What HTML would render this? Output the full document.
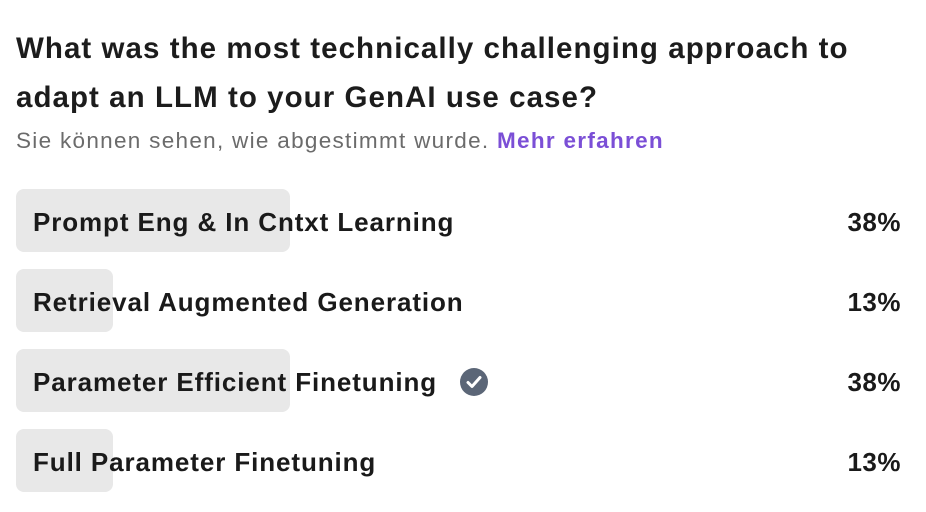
<!DOCTYPE html>
<html><head><meta charset="utf-8"><style>
body{margin:0;width:926px;height:512px;background:#fff;font-family:"Liberation Sans",Arial,sans-serif;color:#1a1a1a;position:relative;overflow:hidden}
.t{position:absolute;left:16px;top:24px;font-size:29.5px;font-weight:bold;line-height:49px;color:#1c1c1c;letter-spacing:1.05px;white-space:nowrap}
.s{position:absolute;left:16px;top:128px;font-size:22.5px;color:#6b6b6b;letter-spacing:1.3px;white-space:nowrap}
.s b{color:#7b4fd6}
.bar{position:absolute;left:16px;height:63px;background:#e8e8e8;border-radius:8px}
.l{position:absolute;left:33px;font-size:26px;font-weight:bold;line-height:63px;color:#1a1a1a;letter-spacing:0.9px;margin-top:2px;white-space:nowrap}
.p{position:absolute;right:25px;font-size:26px;font-weight:bold;line-height:63px;color:#1a1a1a;margin-top:2px;letter-spacing:0.5px}
</style></head><body>
<div class="t">What was the most technically challenging approach to<br>adapt an LLM to your GenAI use case?</div>
<div class="s">Sie können sehen, wie abgestimmt wurde. <b>Mehr erfahren</b></div>
<div class="bar" style="top:189px;width:274px"></div>
<div class="l" style="top:189px">Prompt Eng &amp; In Cntxt Learning</div><div class="p" style="top:189px">38%</div>
<div class="bar" style="top:269px;width:97px"></div>
<div class="l" style="top:269px">Retrieval Augmented Generation</div><div class="p" style="top:269px">13%</div>
<div class="bar" style="top:349px;width:274px"></div>
<div class="l" style="top:349px">Parameter Efficient Finetuning</div><div class="p" style="top:349px">38%</div>
<svg style="position:absolute;left:460px;top:368px" width="28" height="28" viewBox="0 0 28 28"><circle cx="14" cy="14" r="14" fill="#5b6677"/><path d="M8 14.5l4 4 8-9" stroke="#fff" stroke-width="3" fill="none" stroke-linecap="round" stroke-linejoin="round"/></svg>
<div class="bar" style="top:429px;width:97px"></div>
<div class="l" style="top:429px">Full Parameter Finetuning</div><div class="p" style="top:429px">13%</div>
</body></html>
